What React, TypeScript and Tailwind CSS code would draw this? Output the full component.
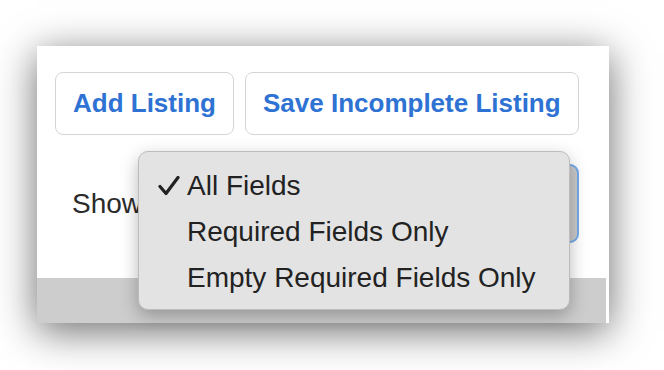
import React from 'react'

const ITEMS = [
  { label: 'All Fields', checked: true },
  { label: 'Required Fields Only', checked: false },
  { label: 'Empty Required Fields Only', checked: false },
]

function CheckMark() {
  return (
    <svg width="22" height="20" viewBox="0 0 22 20" className="absolute left-[19px] top-[13px]">
      <path d="M2 10.5 L8 17.5 L20 1.5" fill="none" stroke="#222" strokeWidth="3.2" strokeLinecap="round" strokeLinejoin="round" />
    </svg>
  )
}

export default function App() {
  return (
    <div className="h-[370px] w-[664px] overflow-hidden bg-white pl-[37px] pt-[46px] font-['Liberation_Sans',Arial,sans-serif]">
      <div className="relative flex h-[277px] w-[572px] flex-col bg-white shadow-[0_8px_38px_rgba(0,0,0,0.58)]">
        {/* content */}
        <div className="flex h-[232px] flex-col bg-white">
          <div className="flex gap-[11px] pl-[18px] pt-[26px]">
            <button className="h-[63px] rounded-[8px] border-[1.5px] border-[#d5d5d5] bg-white px-[17px] text-[26px] font-bold text-[#2e72d3]">
              Add Listing
            </button>
            <button className="h-[63px] rounded-[8px] border-[1.5px] border-[#d5d5d5] bg-white px-[17px] text-[26px] font-bold text-[#2e72d3]">
              Save Incomplete Listing
            </button>
          </div>

          <div className="mt-[29px] flex items-center pl-[35px]">
            <span className="text-[28px] leading-none text-[#2b2b2b]">Show</span>
            <div className="ml-[8px] h-[79px] w-[429px] rounded-[9px] border-2 border-[#74aaec] bg-[#cacaca]" />
          </div>
        </div>

        {/* bottom bar */}
        <div className="flex h-[45px]">
          <div className="flex-1 bg-[#cdcdcd]" />
          <div className="w-[3px] bg-white" />
        </div>

        {/* open select menu */}
        <div className="absolute left-[101px] top-[105px] w-[432px] rounded-[10px] border border-[#bcbcbc] bg-[#e3e3e3] pb-[8px] pt-[11px] shadow-[0_6px_18px_rgba(0,0,0,0.28)]">
          {ITEMS.map((item) => (
            <div key={item.label} className="relative h-[46px] pl-[48px] text-[28px] leading-[46px] text-[#222]">
              {item.checked && <CheckMark />}
              {item.label}
            </div>
          ))}
        </div>
      </div>
    </div>
  )
}
